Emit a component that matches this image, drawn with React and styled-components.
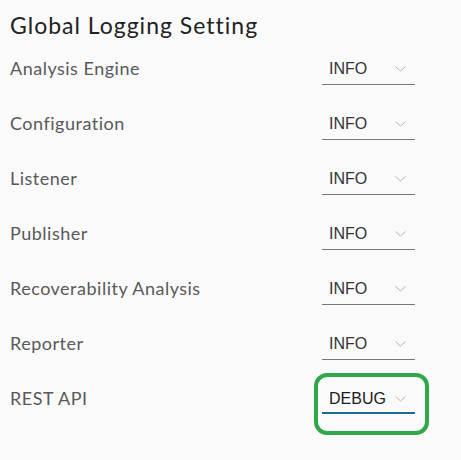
import React from "react";
import styled, { createGlobalStyle } from "styled-components";

const GlobalStyle = createGlobalStyle`
  body {
    margin: 0;
    background: #fafafa;
    font-family: Lato, "Open Sans", sans-serif;
  }
`;

const Page = styled.div`
  width: 461px;
  height: 460px;
  box-sizing: border-box;
  padding: 11px 0 0 10px;
  background: #fafafa;
  overflow: hidden;
`;

const Title = styled.h2`
  margin: 0 0 18px;
  font-size: 23px;
  line-height: 28px;
  font-weight: 400;
  letter-spacing: 1px;
  color: #222;
`;

const Row = styled.div`
  display: grid;
  grid-template-columns: 312px 93px;
  align-items: start;
  height: 55px;
`;

const Label = styled.div`
  font-size: 18px;
  line-height: 22px;
  letter-spacing: 0.5px;
  color: #595959;
`;

const SelectWrap = styled.div`
  position: relative;
`;

const Select = styled.div`
  display: flex;
  align-items: center;
  justify-content: space-between;
  padding: 0 9px ${(p) => (p.active ? "1px" : "3px")} 7px;
  border-bottom: ${(p) => (p.active ? "2px solid #1f6a8e" : "1px solid #777")};
  font-family: "Liberation Sans", Arial, sans-serif;
  font-size: 16px;
  line-height: 24px;
  color: ${(p) => (p.active ? "#1c1c1c" : "#333")};
`;

const Highlight = styled.div`
  position: absolute;
  left: -8px;
  top: -14px;
  right: -14px;
  bottom: -21px;
  border: 4px solid #2fa84a;
  border-radius: 13px;
  pointer-events: none;
`;

const Chevron = () => (
  <svg width="11" height="6" viewBox="0 0 11 6">
    <polyline points="0.5,0.5 5.5,5 10.5,0.5" fill="none" stroke="#b4b4b4" strokeWidth="1" />
  </svg>
);

const rows = [
  ["Analysis Engine", "INFO"],
  ["Configuration", "INFO"],
  ["Listener", "INFO"],
  ["Publisher", "INFO"],
  ["Recoverability Analysis", "INFO"],
  ["Reporter", "INFO"],
  ["REST API", "DEBUG", true],
];

export default function App() {
  return (
    <Page>
      <GlobalStyle />
      <Title>Global Logging Setting</Title>
      {rows.map(([name, level, active]) => (
        <Row key={name}>
          <Label>{name}</Label>
          <SelectWrap>
            <Select active={active}>
              <span>{level}</span>
              <Chevron />
            </Select>
            {active && <Highlight />}
          </SelectWrap>
        </Row>
      ))}
    </Page>
  );
}
